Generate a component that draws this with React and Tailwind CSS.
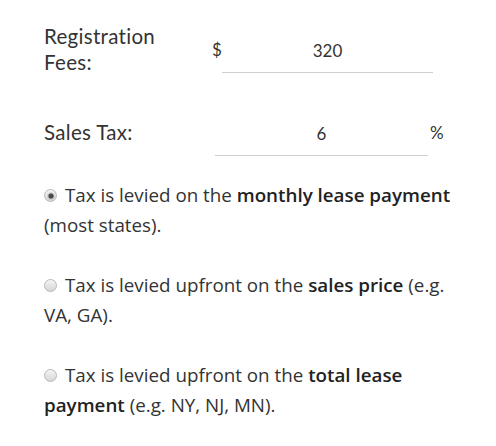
import React from 'react';

function Radio({ checked }) {
  return (
    <span className="relative -top-[1px] inline-block w-[13px] h-[13px] mr-[8px] rounded-full border border-[#b9b9b9] bg-gradient-to-b from-[#f4f4f4] to-[#d6d6d6] align-middle">
      {checked && (
        <span className="absolute left-1/2 top-1/2 w-[5px] h-[5px] -translate-x-1/2 -translate-y-1/2 rounded-full bg-[#4a4a4a] shadow-[0_0_2px_#666]" />
      )}
    </span>
  );
}

const options = [
  { id: 'monthly', checked: true, pre: 'Tax is levied on the ', bold: 'monthly lease payment', post: ' (most states).' },
  { id: 'sales', checked: false, pre: 'Tax is levied upfront on the ', bold: 'sales price', post: ' (e.g. VA, GA).' },
  { id: 'total', checked: false, pre: 'Tax is levied upfront on the ', bold: 'total lease payment', post: ' (e.g. NY, NJ, MN).' },
];

export default function App() {
  return (
    <div className="w-[496px] h-[446px] bg-white pt-[23px] px-[44px] text-[#333]">
      {/* Registration fees */}
      <div className="flex items-start font-['Lato',sans-serif]">
        <label className="w-[168px] text-[20.5px] tracking-[0.3px] leading-[26px] pr-[40px]">Registration Fees:</label>
        <span className="w-[10px] mt-[17px] text-[17px] leading-[20px]">$</span>
        <input
          readOnly
          value="320"
          className="w-[211px] h-[35px] mt-[15px] pb-[10px] text-center text-[17px] border-b border-[#cfcfcf] outline-none bg-transparent"
        />
      </div>

      {/* Sales tax */}
      <div className="flex items-start mt-[44px] font-['Lato',sans-serif]">
        <label className="w-[171px] text-[20.5px] tracking-[0.3px] leading-[26px]">Sales Tax:</label>
        <input
          readOnly
          value="6"
          className="w-[213px] h-[35px] mt-[2px] pb-[10px] text-center text-[17px] border-b border-[#cfcfcf] outline-none bg-transparent"
        />
        <span className="ml-[2px] mt-[4px] text-[17px] leading-[20px]">%</span>
      </div>

      {/* Tax method */}
      <div className="mt-[24px] flex flex-col gap-[30px] font-['Open_Sans',sans-serif] text-[18.8px] leading-[30px]">
        {options.map(o => (
          <p key={o.id}>
            <Radio checked={o.checked} />
            {o.pre}
            <b className="font-semibold text-[#222]">{o.bold}</b>
            {o.post}
          </p>
        ))}
      </div>
    </div>
  );
}
